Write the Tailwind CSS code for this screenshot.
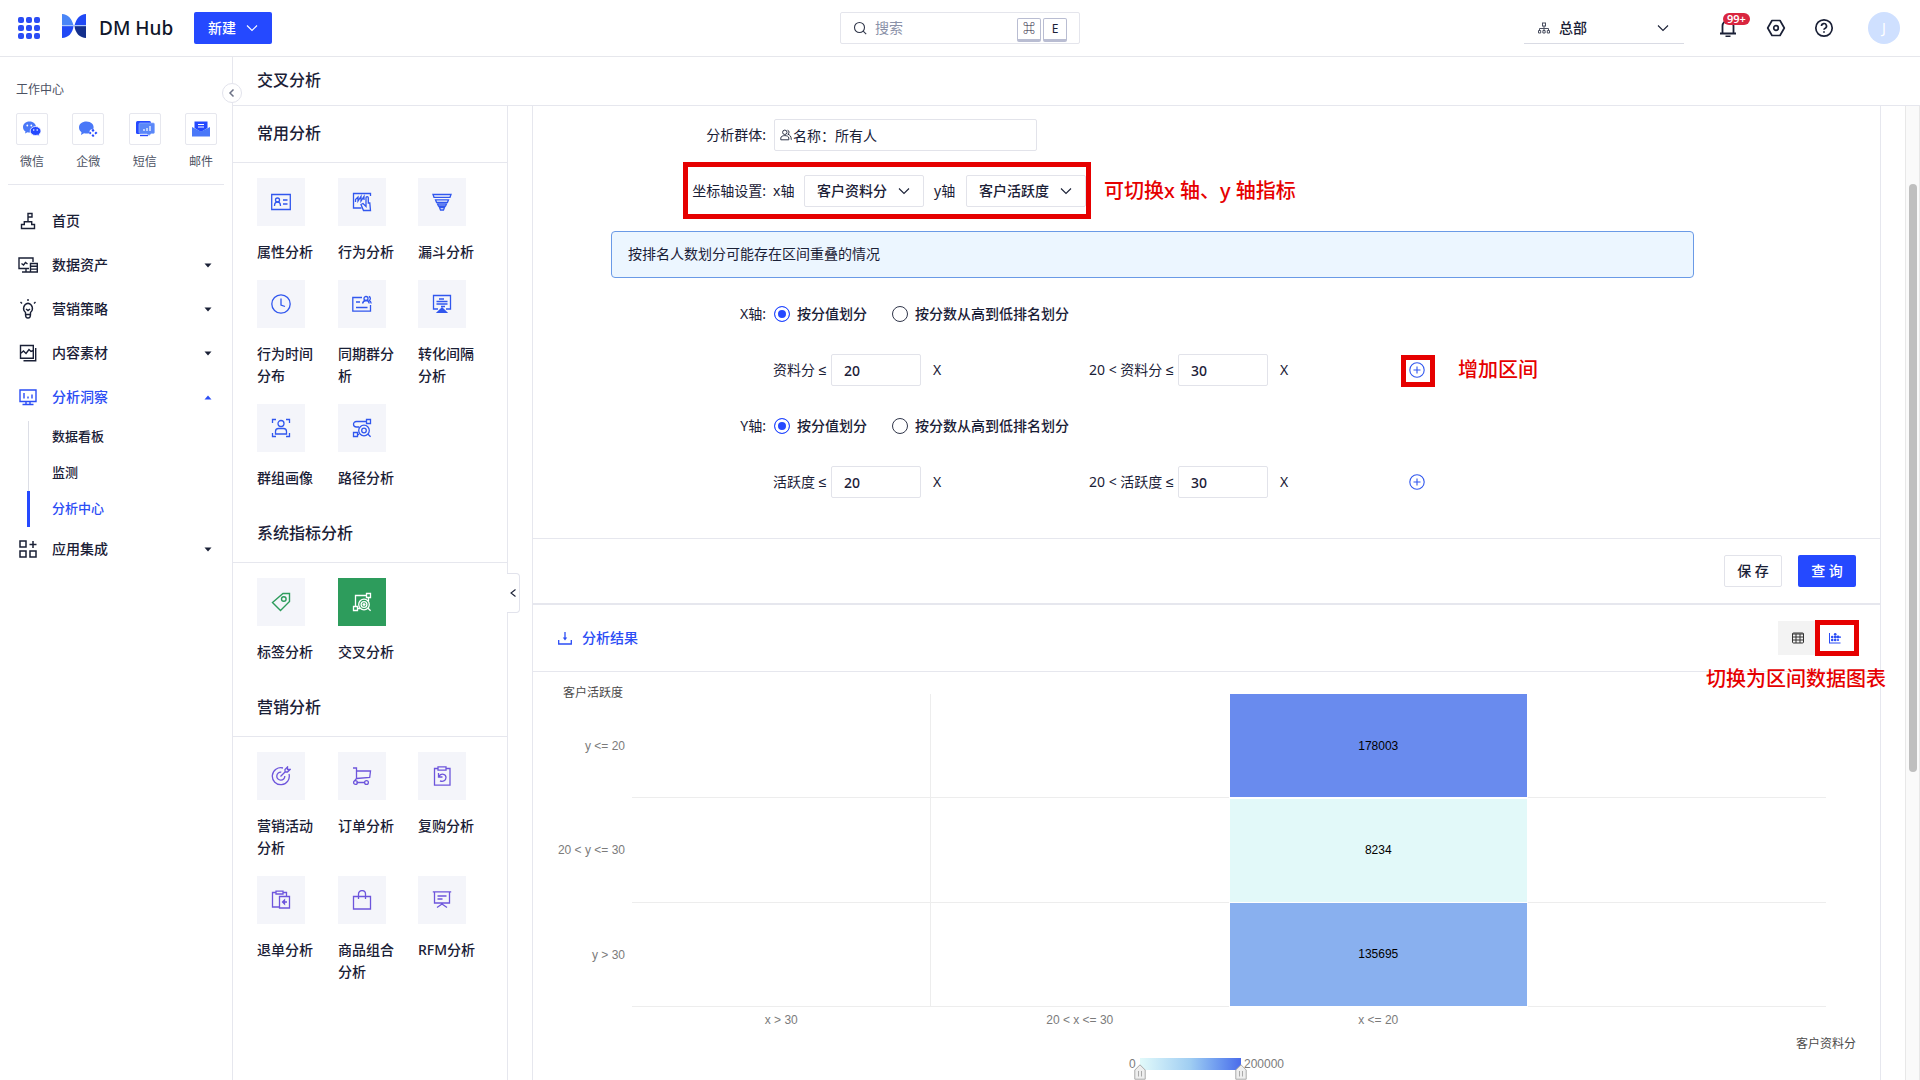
<!DOCTYPE html>
<html lang="zh-CN">
<head>
<meta charset="utf-8">
<title>DM Hub - 交叉分析</title>
<script src="https://cdn.jsdelivr.net/npm/@tailwindcss/browser@4"></script>
</head>
<body class="h-screen overflow-hidden bg-white font-['Noto_Sans','Liberation_Sans','Noto_Sans_CJK_SC',sans-serif] text-sm text-[#1a2036]">
<svg class="hidden">
  <symbol id="down" viewBox="0 0 12 12"><path d="M1 3.500l5 5 5-5" fill="none" stroke="currentColor" stroke-width="1.100"/></symbol>
  <symbol id="caret" viewBox="0 0 8 5"><path d="M.5.5h7L4 4.500z" fill="currentColor"/></symbol>
  <symbol id="plus" viewBox="0 0 16 16"><g fill="none" stroke="currentColor" stroke-width="1.100"><circle cx="8" cy="8" r="7.200"/><path d="M8 4.500v7M4.500 8h7"/></g></symbol>
</svg>
<div class="flex h-full flex-col">

  <header class="flex h-[57px] shrink-0 items-center border-b border-[#e6e7ec]">
    <div class="flex flex-1 items-center">
      <button class="ml-[17px]" aria-label="应用">
        <svg class="size-6" viewBox="0 0 24 24" fill="#2b4df5"><g id="d"><rect x="1" y="1" width="6" height="6" rx="2"/><rect x="9" y="1" width="6" height="6" rx="2"/><rect x="17" y="1" width="6" height="6" rx="2"/></g><use href="#d" y="8"/><use href="#d" y="16"/></svg>
      </button>
      <a href="#" class="ml-[21px] flex w-[112px] items-center gap-[13px] text-[19px] leading-6 font-medium whitespace-nowrap text-[#10162a]">
        <svg class="-mt-1 size-6 shrink-0" viewBox="0 0 24 24"><path d="M0 0c6 0 10 5 11.500 11.500H0z" fill="#4a86f7"/><path d="M0 12h11.500C11 19 6 24 0 24z" fill="#2049f5"/><path d="M24 0c-6 0-10 5-11.500 11.500H24z" fill="#2049f5"/><path d="M24 12H12.500C13 19 18 24 24 24z" fill="#142f8c"/><path d="M0 11h24v1.200H0z" fill="#a9c6fb"/></svg>
        DM Hub
      </a>
      <button class="ml-5 flex h-8 w-[78px] items-center justify-center gap-2.5 rounded-xs bg-[#2549ff] font-medium text-white">新建<svg class="size-3"><use href="#down"/></svg></button>
    </div>
    <div class="flex h-8 w-60 items-center gap-2 rounded-xs border border-[#e4e5ec] px-3">
      <svg class="size-[14px] shrink-0" viewBox="0 0 14 14" fill="none" stroke="#30364a" stroke-width="1.100"><circle cx="6.500" cy="6.500" r="5"/><path d="M10.200 10.200l3 3"/></svg>
      <input type="search" aria-label="搜索" placeholder="搜索" class="w-32 outline-none placeholder:text-[#8a91a8]">
      <kbd class="mt-[3px] ml-auto h-6 w-6 shrink-0 rounded-xs border border-b-3 border-[#b9bdd2] text-center font-[inherit] text-xs leading-5 font-medium">⌘</kbd>
      <kbd class="mt-[3px] -ml-1.5 h-6 w-6 shrink-0 rounded-xs border border-b-3 border-[#b9bdd2] text-center font-[inherit] text-xs leading-5">E</kbd>
    </div>
    <div class="flex flex-1 items-center justify-end">
      <div class="relative mr-[35px] flex h-8 w-40 items-center border-b border-[#d9dbe4]">
        <svg class="absolute left-[14px] size-3" viewBox="0 0 12 12" fill="none" stroke="#4a4f60"><rect x="4.500" y="1" width="3" height="3"/><path d="M6 4v5M1.500 9V6.500h9V9"/><path d="M.5 8.500h2.200v2.500H.5zM4.900 8.500h2.200v2.500H4.900zM9.300 8.500h2.200v2.500H9.300z"/></svg>
        <select aria-label="组织" class="w-full appearance-none pl-[35px] font-medium outline-none"><option>总部</option></select>
        <svg class="pointer-events-none absolute right-[15px] size-3"><use href="#down"/></svg>
      </div>
      <button class="relative" aria-label="通知">
        <svg class="size-[18px]" viewBox="0 0 18 18" fill="none" stroke="#1a2036" stroke-width="1.800"><path d="M1 14.500h16M3.500 14V7a5.500 5.500 0 0111 0v7M6.500 17.500h5"/></svg>
        <span class="absolute -top-1.5 left-1 h-3 rounded-full bg-[#d9263f] px-1 text-[11px] leading-3 font-semibold text-white">99+</span>
      </button>
      <button class="ml-[29px]" aria-label="设置"><svg class="size-5" viewBox="0 0 20 20" fill="none" stroke="#1a2036" stroke-width="1.700"><path d="M6 2.500h8l4.300 7.500L14 17.500H6L1.700 10z" stroke-linejoin="round"/><circle cx="10" cy="10" r="2.300"/></svg></button>
      <button class="ml-7" aria-label="帮助"><svg class="size-5" viewBox="0 0 20 20" fill="none" stroke="#1a2036" stroke-width="1.700"><circle cx="10" cy="10" r="8.200"/><path d="M7.500 8a2.500 2.500 0 113.700 2.200c-.8.400-1.200.8-1.200 1.600"/><path d="M10 13.300v1.500"/></svg></button>
      <button class="mr-5 ml-[34px] size-8 rounded-full bg-[#cfe0ff] text-white">J</button>
    </div>
  </header>

  <div class="flex min-h-0 flex-1">
    <aside class="relative w-[233px] shrink-0 border-r border-[#e6e7ee]">
      <h2 class="mt-6 ml-4 text-xs leading-[18px] text-[#4c5263]">工作中心</h2>
      <ul class="mr-[15px] ml-4 mt-[14px] flex justify-between text-center text-xs leading-[18px] text-[#4c5263]">
        <li><a href="#"><span class="flex size-8 items-center justify-center rounded-xs border border-[#e6e7ee]"><svg class="size-5" viewBox="0 0 20 20"><path d="M7.500 2.500c-4 0-6.500 2.500-6.500 5.500 0 2 1 3.500 2.500 4.500L3 14.500l2.500-1.200c3 .7 8.500-.3 8.500-5.300 0-3-2.500-5.500-6.500-5.500z" fill="#4a78f8"/><path d="M13.500 7.500c-3 0-5.300 2-5.300 4.500s2.300 4.500 5.300 4.500c.7 0 1.300-.1 1.900-.3l2 1-.4-1.700c1.200-.8 2-2 2-3.500 0-2.500-2.500-4.500-5.500-4.500z" fill="#2549ff" stroke="#fff" stroke-width=".8"/><g fill="#fff"><circle cx="5.300" cy="6.500" r=".9"/><circle cx="9.300" cy="6.500" r=".9"/><circle cx="11.700" cy="11" r=".8"/><circle cx="15.200" cy="11" r=".8"/></g></svg></span><span class="mt-2 block">微信</span></a></li>
        <li><a href="#"><span class="flex size-8 items-center justify-center rounded-xs border border-[#e6e7ee]"><svg class="size-5" viewBox="0 0 20 20"><path d="M8.500 2.500C4 2.500 1 5 1 8.500c0 2 1 3.700 2.500 4.700L3 16l3-1.700c3 .7 5 0 5 0l1-3.300 3.500-1.500c.8-4-2.500-7-7-7z" fill="#4a78f8"/><path d="M15 9.500l1.500 2-1.500 1.500-1.500-1.500zM18 12.500l1.500 1.500-2 1.500-1-1.500zM15 15l1.500 2-1.500 1-1.500-1.500zM12 12.500l1.500 1.500-1.500 1.500-1-1.500z" fill="#2549ff"/></svg></span><span class="mt-2 block">企微</span></a></li>
        <li><a href="#"><span class="flex size-8 items-center justify-center rounded-xs border border-[#e6e7ee]"><svg class="size-5" viewBox="0 0 20 20"><rect x="1" y="2" width="15" height="13" rx="1.500" fill="#2549ff"/><path d="M5 4h13c1 0 1.500.5 1.500 1.500v7.500c0 1-.5 1.500-1.500 1.500h-2l-2 2-2-2H5.500C4.500 14.500 4 14 4 13V5.500C4 4.500 4.500 4 5 4z" fill="#5a87f8" stroke="#8fb0ff" stroke-width=".7"/><path d="M9 12v-2M12 12V9M15 12V7" stroke="#fff" stroke-width="1.200"/><path d="M5 16.500h8" stroke="#2549ff" stroke-width="1.400"/></svg></span><span class="mt-2 block">短信</span></a></li>
        <li><a href="#"><span class="flex size-8 items-center justify-center rounded-xs border border-[#e6e7ee]"><svg class="size-5" viewBox="0 0 20 20"><path d="M3.500 2.500h13V9L10 13 3.500 9z" fill="#2549ff"/><path d="M7 5.500h6M7 8h6" stroke="#fff"/><path d="M1 8l9 4.500L19 8v9.500H1z" fill="#4a78f8"/></svg></span><span class="mt-2 block">邮件</span></a></li>
      </ul>
      <hr class="mx-2 mt-[13px] border-[#e6e7ee]">
      <button aria-label="收起" class="absolute top-[26px] -right-[10px] z-10 flex size-5 items-center justify-center rounded-full border border-[#e2e3ec] bg-white"><svg class="size-2.5" viewBox="0 0 10 10" fill="none" stroke="#6d7387" stroke-width="1.500"><path d="M6.500 1.500L3 5l3.500 3.500"/></svg></button>

      <nav class="mt-[14px] font-medium">
        <a href="#" class="flex h-11 items-center gap-[14px] pr-5 pl-[18px]"><svg class="size-5" viewBox="0 0 20 20" fill="none" stroke="currentColor" stroke-width="1.400"><path d="M3.500 17.500v-4h2.800v-2.800h7.400v2.800h2.800v4zM10 10.500V2.500h4v3.500h-4"/></svg>首页</a>
        <a href="#" class="flex h-11 items-center gap-[14px] pr-5 pl-[18px]"><svg class="size-5" viewBox="0 0 20 20" fill="none" stroke="currentColor" stroke-width="1.400"><path d="M11 13.500H1V3h14v4M3.500 8.500l2 1.500 2-2.500 2 1.500M4 17h8M8 14v3"/><path d="M12.500 8.500h6.800v8.500h-6.800zM12.500 11.300h6.800M12.500 14.100h6.800"/></svg>数据资产<svg class="ml-auto h-[5px] w-2"><use href="#caret"/></svg></a>
        <a href="#" class="flex h-11 items-center gap-[14px] pr-5 pl-[18px]"><svg class="size-5" viewBox="0 0 20 20" fill="none" stroke="currentColor" stroke-width="1.400"><path d="M7.500 15.500v-2A5.300 5.300 0 0110 4.200a5.300 5.300 0 012.500 9.300v2c0 2-1 3.500-2.500 3.500s-2.500-1.500-2.500-3.500zM7.500 15.500h5M8 10l2 1.500 2-1.500M10 0v2M2.500 3l1.500 1.500M17.500 3L16 4.500"/></svg>营销策略<svg class="ml-auto h-[5px] w-2"><use href="#caret"/></svg></a>
        <a href="#" class="flex h-11 items-center gap-[14px] pr-5 pl-[18px]"><svg class="size-5" viewBox="0 0 20 20" fill="none" stroke="currentColor" stroke-width="1.400"><path d="M2.500 2.500h12.800v12.800H2.500zM2.500 10.500l3-2.500 2.500 2.500 3-4 2 2 2.300-1M17.700 5v12.700H5.500"/></svg>内容素材<svg class="ml-auto h-[5px] w-2"><use href="#caret"/></svg></a>
        <a href="#" class="flex h-11 items-center gap-[14px] pr-5 pl-[18px] text-[#2b4df5]"><svg class="size-5" viewBox="0 0 20 20" fill="none" stroke="currentColor" stroke-width="1.400"><path d="M2 3h16v11.500H2zM6 6v5.500M10 9.500v2M14 7.500v4M8 14.500v3M12 14.500v3M4.500 17.500h11"/></svg>分析洞察<svg class="ml-auto h-[5px] w-2 rotate-180"><use href="#caret"/></svg></a>
        <div class="relative ml-[27px] text-[13px] leading-[34px] before:absolute before:top-0.5 before:bottom-9 before:left-px before:w-px before:bg-[#dcdee6]">
          <a href="#" class="block h-9 pl-[25px]">数据看板</a>
          <a href="#" class="block h-9 pl-[25px]">监测</a>
          <a href="#" class="block h-9 border-l-3 border-[#2549ff] pl-[22px] text-[#2b4df5]">分析中心</a>
        </div>
        <a href="#" class="flex h-11 items-center gap-[14px] pr-5 pl-[18px]"><svg class="size-5" viewBox="0 0 20 20" fill="none" stroke="currentColor" stroke-width="1.500"><path d="M2 2h6v6H2zM2 12h6v6H2zM12 12h6v6h-6zM15 2v7M11.500 5.500h7"/></svg>应用集成<svg class="ml-auto h-[5px] w-2"><use href="#caret"/></svg></a>
      </nav>
    </aside>

    <div class="flex min-w-0 flex-1 flex-col">
      <h1 class="h-[49px] shrink-0 border-b border-[#e6e7ee] pl-6 text-base leading-[46px] font-medium">交叉分析</h1>
      <div class="flex min-h-0 flex-1">

        <section class="relative w-[275px] shrink-0 border-r border-[#e6e7ee] leading-[22px] font-medium">
          <h2 class="h-[57px] border-b border-[#e6e7ee] pl-6 text-base leading-[54px]">常用分析</h2>
          <div class="grid grid-cols-[81px_80px_56px] gap-y-[17px] px-6 pt-[15px] pb-[17px] text-[#3157ee]">
            <a href="#"><span class="mb-[15px] flex size-12 items-center justify-center bg-[#f4f5fa]"><svg class="size-5" viewBox="0 0 20 20" fill="none" stroke="currentColor" stroke-width="1.300"><path d="M.7 2.500h18.600v15H.7z"/><circle cx="6.500" cy="8" r="2"/><path d="M3.500 14c0-2.500 1-4 3-4s3 1.500 3 4M12 8h4.500M12 12h4.500"/></svg></span><span class="block w-14 text-[#1a2036]">属性分析</span></a>
            <a href="#"><span class="mb-[15px] flex size-12 items-center justify-center bg-[#f4f5fa]"><svg class="size-5" viewBox="0 0 20 20" fill="none" stroke="currentColor" stroke-width="1.300"><path d="M9.500 16H1.500V1.500h17V4M3.500 10V7.500L6 5v4l3-4.500V9l3-4.500V8"/><path d="M14 11.500V5.800c0-1.500 2.300-1.500 2.300 0v5.200h1.500l.7 7.500h-7L9 12.500l2-1 3 3v-3"/></svg></span><span class="block w-14 text-[#1a2036]">行为分析</span></a>
            <a href="#"><span class="mb-[15px] flex size-12 items-center justify-center bg-[#f4f5fa]"><svg class="size-5" viewBox="0 0 20 20" fill="none" stroke="currentColor" stroke-width="1.300"><path d="M1 2.500h18L18 5.300H2zM3.500 7.800h13l-1 2.500h-11zM5.500 12h9L13.500 14h-7zM7.500 15.500h5l-1 2.500h-3z"/></svg></span><span class="block w-14 text-[#1a2036]">漏斗分析</span></a>
            <a href="#"><span class="mb-[15px] flex size-12 items-center justify-center bg-[#f4f5fa]"><svg class="size-5" viewBox="0 0 20 20" fill="none" stroke="currentColor" stroke-width="1.300"><circle cx="10" cy="10" r="9.200"/><path d="M10 4.500V11l4 1.500"/></svg></span><span class="block w-14 text-[#1a2036]">行为时间分布</span></a>
            <a href="#"><span class="mb-[15px] flex size-12 items-center justify-center bg-[#f4f5fa]"><svg class="size-5" viewBox="0 0 20 20" fill="none" stroke="currentColor" stroke-width="1.300"><path d="M10 3.500H.8v13.700h17.700V11M4 8h4M4 13.500h11.500"/><circle cx="14" cy="4.500" r="2"/><path d="M10.500 9.500c.5-2 1.500-3 3.500-3s3 1 3.200 3M16.800 2.500c2 .5 2 3 .5 4 1.200.5 1.700 1.500 1.900 3"/></svg></span><span class="block w-14 text-[#1a2036]">同期群分析</span></a>
            <a href="#"><span class="mb-[15px] flex size-12 items-center justify-center bg-[#f4f5fa]"><svg class="size-5" viewBox="0 0 20 20" fill="none" stroke="currentColor" stroke-width="1.300"><path d="M6 15H1.500V1.500h17V15H14M4.500 7.500h11M7 5h5M4.500 10h11M9 12.500h4"/><path d="M10 14l-4.500 4.300h9z" fill="currentColor"/></svg></span><span class="block w-14 text-[#1a2036]">转化间隔分析</span></a>
            <a href="#"><span class="mb-[15px] flex size-12 items-center justify-center bg-[#f4f5fa]"><svg class="size-5" viewBox="0 0 20 20" fill="none" stroke="currentColor" stroke-width="1.300"><path d="M5 1.500H1.500V5M15 1.500h3.500V5M5 18.500H1.500V15M15 18.500h3.500V15"/><circle cx="10" cy="5.500" r="3"/><path d="M4.500 16v-2.500c0-2 1.500-3 3-3h5c1.500 0 3 1 3 3V16z"/></svg></span><span class="block w-14 text-[#1a2036]">群组画像</span></a>
            <a href="#"><span class="mb-[15px] flex size-12 items-center justify-center bg-[#f4f5fa]"><svg class="size-5" viewBox="0 0 20 20" fill="none" stroke="currentColor" stroke-width="1.300"><path d="M14.500 1.500h4v4h-4zM1.500 14.500h4v4h-4zM14.500 3.500H4.500C.5 3.500.5 9 4.500 9H7M5.500 16.500H7"/><circle cx="12" cy="12.500" r="5.300"/><circle cx="12" cy="12.500" r="2.300"/><path d="M15.800 16l2.800 2.700"/></svg></span><span class="block w-14 text-[#1a2036]">路径分析</span></a>
          </div>
          <h2 class="h-[57px] border-b border-[#e6e7ee] pl-6 text-base leading-[54px]">系统指标分析</h2>
          <div class="grid grid-cols-[81px_80px_56px] gap-y-[17px] px-6 pt-[15px] pb-[17px]">
            <a href="#"><span class="mb-[15px] flex size-12 items-center justify-center bg-[#f4f5fa] text-[#2d9c5c]"><svg class="size-5" viewBox="0 0 20 20" fill="none" stroke="currentColor" stroke-width="1.400"><path d="M18.500 1.500H12l-10.500 9 8 8 9-9z"/><circle cx="12.800" cy="7" r="2.300"/></svg></span><span class="block w-14">标签分析</span></a>
            <a href="#"><span class="mb-[15px] flex size-12 items-center justify-center bg-[#2d9c5c] text-white"><svg class="size-5" viewBox="0 0 20 20" fill="none" stroke="currentColor" stroke-width="1.300"><path d="M14.500 1.500h4v4h-4zM1.500 14.500h4v4h-4zM14.500 3.500h-11v11M16.500 5.500V9M5.500 16.500H8"/><circle cx="12" cy="12.500" r="5.300"/><circle cx="12" cy="12.500" r="2.900"/><path d="M15.800 16l2.800 2.700M10.500 12.500h3M12 11v3"/></svg></span><span class="block w-14">交叉分析</span></a>
          </div>
          <h2 class="h-[57px] border-b border-[#e6e7ee] pl-6 text-base leading-[54px]">营销分析</h2>
          <div class="grid grid-cols-[81px_80px_56px] gap-y-[17px] px-6 pt-[15px] pb-[17px] text-[#6d55dc]">
            <a href="#"><span class="mb-[15px] flex size-12 items-center justify-center bg-[#f4f5fa]"><svg class="size-5" viewBox="0 0 20 20" fill="none" stroke="currentColor" stroke-width="1.300"><path d="M18 8A8.500 8.500 0 1112 2M13.800 10a4 4 0 11-3.500-3.800M9.500 10.500l5-5M14 6V3.500L16.500 1v2.500H19L16.500 6z"/></svg></span><span class="block w-14 text-[#1a2036]">营销活动分析</span></a>
            <a href="#"><span class="mb-[15px] flex size-12 items-center justify-center bg-[#f4f5fa]"><svg class="size-5" viewBox="0 0 20 20" fill="none" stroke="currentColor" stroke-width="1.300"><path d="M1 2h3.500v10.500L2.500 15M4.500 5h14l-.8 6.500L4.500 12.500M4.500 16.500h8"/><circle cx="3.500" cy="16.500" r="1.900"/><circle cx="14.500" cy="16.500" r="1.900"/></svg></span><span class="block w-14 text-[#1a2036]">订单分析</span></a>
            <a href="#"><span class="mb-[15px] flex size-12 items-center justify-center bg-[#f4f5fa]"><svg class="size-5" viewBox="0 0 20 20" fill="none" stroke="currentColor" stroke-width="1.300"><path d="M6 2.500H2.500v16.700h15.500V2.500H14M6 .8h8v3.400H6zM6.500 7v4h4M7 10c2.500-3 7-2 7 1.500s-3.500 4.500-6 3.300"/></svg></span><span class="block w-14 text-[#1a2036]">复购分析</span></a>
            <a href="#"><span class="mb-[15px] flex size-12 items-center justify-center bg-[#f4f5fa]"><svg class="size-5" viewBox="0 0 20 20" fill="none" stroke="currentColor" stroke-width="1.300"><path d="M5 2.500H1.500V17H8M12 2.500h3.500V6M5 1.200h7v2.800H5zM8.500 6.500h10v11.500h-10zM16 12h-4.500M13.500 10l-2 2 2 2z"/></svg></span><span class="block w-14 text-[#1a2036]">退单分析</span></a>
            <a href="#"><span class="mb-[15px] flex size-12 items-center justify-center bg-[#f4f5fa]"><svg class="size-5" viewBox="0 0 20 20" fill="none" stroke="currentColor" stroke-width="1.300"><path d="M1.500 6.500h17V19h-17zM6.500 9V4c0-4.500 7-4.500 7 0v5"/></svg></span><span class="block w-14 text-[#1a2036]">商品组合分析</span></a>
            <a href="#"><span class="mb-[15px] flex size-12 items-center justify-center bg-[#f4f5fa]"><svg class="size-5" viewBox="0 0 20 20" fill="none" stroke="currentColor" stroke-width="1.300"><path d="M.8 1.800h18.400M2.500 2v11h15V2M5.500 6h9M5.500 9h5M10 13v1.500M5 17.500l5-3.500 5 3.500"/></svg></span><span class="block w-14 whitespace-nowrap text-[#1a2036]">RFM分析</span></a>
          </div>
          <button aria-label="收起面板" class="absolute top-[467px] -right-[13px] flex h-10 w-[13px] items-center justify-center rounded-r border border-l-0 border-[#e2e3ec] bg-white"><svg class="size-2.5" viewBox="0 0 10 10" fill="none" stroke="#1a2036" stroke-width="1.100"><path d="M7.500 1.500L3 5l4.500 3.500"/></svg></button>
        </section>

        <main class="mx-6 flex min-w-0 flex-1 flex-col border-x border-[#e6e7ee]">
          <form class="font-medium">
            <div class="mt-[13px] mb-6 flex h-8 items-center">
              <label for="group" class="mr-2 w-[233px] text-right font-normal">分析群体:</label>
              <div class="relative">
                <svg class="absolute top-[10px] left-[6px] size-3" viewBox="0 0 12 12" fill="none" stroke="#30364a"><circle cx="4.800" cy="3.300" r="2.200"/><path d="M.8 10.800V9c0-3.200 8-3.200 8 0v1.800zM7.500 1.200c2 .2 2 3.500.3 4 2 .6 3.500 2 3.500 5.600"/></svg>
                <input id="group" value="名称：所有人" class="h-8 w-[263px] rounded-xs border border-[#e2e3ea] pl-[18px] font-normal outline-none">
              </div>
            </div>
            <div class="relative mb-6 flex h-8 items-center">
              <span class="mr-[7px] w-[233px] text-right font-normal">坐标轴设置:</span>
              <label for="xa" class="w-[31px] font-normal">x轴</label>
              <span class="relative mr-2.5"><select id="xa" class="h-8 w-[120px] appearance-none rounded-xs border border-[#e2e3ea] pl-3 outline-none"><option>客户资料分</option></select><svg class="pointer-events-none absolute top-[10px] right-[14px] size-3"><use href="#down"/></svg></span>
              <label for="ya" class="w-8 font-normal">y轴</label>
              <span class="relative"><select id="ya" class="h-8 w-[120px] appearance-none rounded-xs border border-[#e2e3ea] pl-3 outline-none"><option>客户活跃度</option></select><svg class="pointer-events-none absolute top-[10px] right-[14px] size-3"><use href="#down"/></svg></span>
              <span class="absolute -top-[13px] left-[150px] h-[57px] w-[408px] border-5 border-[#e60000]"></span>
              <span class="absolute left-[571px] text-xl whitespace-nowrap text-[#e60000]">可切换x 轴、y 轴指标</span>
            </div>
            <p class="mr-[186px] mb-5 ml-[78px] h-[47px] rounded-sm border border-[#6a9ae6] bg-[#ecf6ff] px-4 leading-[43px] font-normal">按排名人数划分可能存在区间重叠的情况</p>

            <fieldset class="mb-6 flex h-8 items-center">
              <span class="mr-2 w-[233px] text-right font-normal">X轴:</span>
              <label class="mr-[25px] flex items-center gap-[7px]"><input type="radio" name="x" checked class="size-4 appearance-none rounded-full border border-[#30364a] checked:border-[#2549ff] checked:bg-[#2549ff] checked:shadow-[inset_0_0_0_3px_white]">按分值划分</label>
              <label class="flex items-center gap-[7px]"><input type="radio" name="x" class="size-4 appearance-none rounded-full border border-[#30364a]">按分数从高到低排名划分</label>
            </fieldset>
            <div class="mb-6 flex h-8 items-center pl-60">
              <div class="flex w-[316px] items-center whitespace-nowrap"><label for="x1" class="w-[58px] font-normal">资料分 ≤</label><input id="x1" value="20" class="mr-3 h-8 w-[90px] rounded-xs border border-[#e2e3ea] pl-3 outline-none"><button type="button" aria-label="删除" class="font-normal">X</button></div>
              <div class="flex w-[320px] items-center whitespace-nowrap"><label for="x2" class="w-[89px] font-normal">20 &lt; 资料分 ≤</label><input id="x2" value="30" class="mr-3 h-8 w-[90px] rounded-xs border border-[#e2e3ea] pl-3 outline-none"><button type="button" aria-label="删除" class="font-normal">X</button></div>
              <div class="relative flex items-center">
                <button type="button" aria-label="增加区间" class="size-4 text-[#3157ee]"><svg class="size-4"><use href="#plus"/></svg></button>
                <span class="absolute -top-[7px] -left-2 h-8 w-[34px] border-5 border-[#e60000]"></span>
                <span class="absolute left-[49px] text-xl whitespace-nowrap text-[#e60000]">增加区间</span>
              </div>
            </div>
            <fieldset class="mb-6 flex h-8 items-center">
              <span class="mr-2 w-[233px] text-right font-normal">Y轴:</span>
              <label class="mr-[25px] flex items-center gap-[7px]"><input type="radio" name="y" checked class="size-4 appearance-none rounded-full border border-[#30364a] checked:border-[#2549ff] checked:bg-[#2549ff] checked:shadow-[inset_0_0_0_3px_white]">按分值划分</label>
              <label class="flex items-center gap-[7px]"><input type="radio" name="y" class="size-4 appearance-none rounded-full border border-[#30364a]">按分数从高到低排名划分</label>
            </fieldset>
            <div class="mb-10 flex h-8 items-center pl-60">
              <div class="flex w-[316px] items-center whitespace-nowrap"><label for="y1" class="w-[58px] font-normal">活跃度 ≤</label><input id="y1" value="20" class="mr-3 h-8 w-[90px] rounded-xs border border-[#e2e3ea] pl-3 outline-none"><button type="button" aria-label="删除" class="font-normal">X</button></div>
              <div class="flex w-[320px] items-center whitespace-nowrap"><label for="y2" class="w-[89px] font-normal">20 &lt; 活跃度 ≤</label><input id="y2" value="30" class="mr-3 h-8 w-[90px] rounded-xs border border-[#e2e3ea] pl-3 outline-none"><button type="button" aria-label="删除" class="font-normal">X</button></div>
              <button type="button" aria-label="增加区间" class="size-4 text-[#3157ee]"><svg class="size-4"><use href="#plus"/></svg></button>
            </div>
            <div class="flex justify-end gap-4 border-t border-b-2 border-[#e6e7ee] py-4 pr-6">
              <button type="button" class="h-8 w-[58px] rounded-xs border border-[#e2e3ea]">保 存</button>
              <button type="button" class="h-8 w-[58px] rounded-xs bg-[#2549ff] text-white">查 询</button>
            </div>
          </form>

          <section>
            <div class="flex h-[67px] items-center border-b border-[#e6e7ee] pr-6 pl-[25px]">
              <button class="flex items-center gap-[10px] font-medium text-[#2b4df5]"><svg class="size-[14px]" viewBox="0 0 14 14" fill="none" stroke="currentColor" stroke-width="1.300"><path d="M.7 9v4h12.600V9M7 1v7"/><path d="M4.800 6.500h4.400L7 9.500z" fill="currentColor" stroke="none"/></svg>分析结果</button>
              <div class="relative ml-auto flex">
                <button aria-label="表格" class="flex h-[34px] w-10 items-center justify-center bg-[#f3f3f3]"><svg class="size-3" viewBox="0 0 12 12" fill="none" stroke="#333"><rect x=".5" y="1" width="11" height="10" rx="1"/><path d="M.5 2h11M.5 5h11M.5 8h11M4 2v9M8 2v9"/></svg></button>
                <button aria-label="图表" class="flex h-[34px] w-[38px] items-center justify-center pr-1"><svg class="size-3" viewBox="0 0 12 12" fill="#2b4df5"><path d="M0 1h1v9.500h10.500v1H0z"/><circle cx="3.200" cy="5" r="1.300"/><circle cx="3.200" cy="8" r="1.300"/><circle cx="6.200" cy="2.300" r="1.300"/><circle cx="6.200" cy="5" r="1.400"/><circle cx="6.200" cy="8" r="1.300"/><circle cx="9" cy="5" r="1.400"/><circle cx="9" cy="8" r="1.100"/><path d="M9 4.500h3v1.200H9zM6.200 4.500H9v1H6.200z"/></svg></button>
                <span class="absolute -top-px -right-[3px] h-9 w-11 border-5 border-[#e60000]"></span>
                <span class="absolute top-[42px] -right-[30px] z-10 text-xl leading-8 font-medium whitespace-nowrap text-[#e60000]">切换为区间数据图表</span>
              </div>
            </div>

            <div class="relative pt-[22px] pr-[54px] font-['Liberation_Sans','Noto_Sans_CJK_SC',sans-serif] text-xs leading-4 text-[#7b7b7b]">
              <h3 class="absolute top-[13px] left-[30px] text-[#4a4a4a]">客户活跃度</h3>
              <div class="grid h-[313px] grid-cols-[99px_repeat(4,1fr)] grid-rows-3 text-black *:flex *:items-center *:justify-center *:border-b *:border-[#ededed]">
                <div class="justify-end! border-none! pr-[7px] text-[#7b7b7b]">y &lt;= 20</div><div class="border-r"></div><div></div><div class="border-x border-white! bg-[#698bee]">178003</div><div></div>
                <div class="justify-end! border-none! pr-[7px] text-[#7b7b7b]">20 &lt; y &lt;= 30</div><div class="border-r"></div><div></div><div class="border-x border-t border-white! bg-[#e2f9f9]">8234</div><div></div>
                <div class="justify-end! border-none! pr-[7px] text-[#7b7b7b]">y &gt; 30</div><div class="border-r"></div><div></div><div class="border-x border-white! bg-[#89b0ef]">135695</div><div></div>
              </div>
              <div class="mt-[5px] ml-[99px] grid grid-cols-4 text-center"><span>x &gt; 30</span><span>20 &lt; x &lt;= 30</span><span>x &lt;= 20</span></div>
              <p class="mt-2 -mr-[30px] text-right text-[#4a4a4a]">客户资料分</p>
              <div class="mt-1 ml-[596px] flex items-center">
                <span class="w-[11px]">0</span>
                <div class="relative h-3 w-[101px] bg-linear-to-r from-[#e2fafa] via-[#9fcdf2] to-[#4b6bea]">
                  <svg class="absolute top-1.5 -left-1.5 h-4 w-3" viewBox="0 0 12 16" fill="#eee" stroke="#aaa"><path d="M.8 6L6 .8 11.200 6v9.200H.8zM4.500 7v5.500M7.500 7v5.500"/></svg>
                  <svg class="absolute top-1.5 -right-1.5 h-4 w-3" viewBox="0 0 12 16" fill="#eee" stroke="#aaa"><path d="M.8 6L6 .8 11.200 6v9.200H.8zM4.500 7v5.500M7.500 7v5.500"/></svg>
                </div>
                <span class="ml-[3px]">200000</span>
              </div>
            </div>
          </section>
        </main>

        <div class="w-[15px] shrink-0 border-x border-[#e8e8e8] bg-[#fafafa] px-[3px] pt-[78px]"><div class="h-[588px] w-2 rounded-full bg-[#bfbfbf]"></div></div>
      </div>
    </div>
  </div>
</div>
</body>
</html>
